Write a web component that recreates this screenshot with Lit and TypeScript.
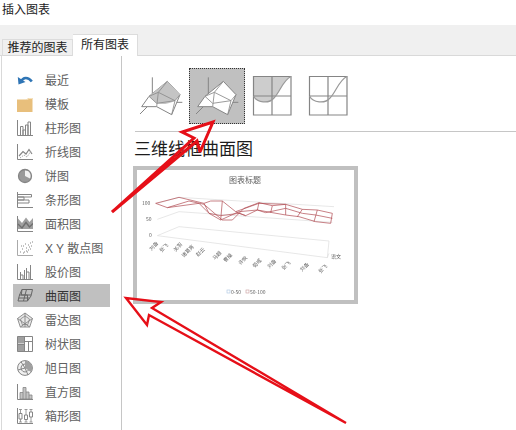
import { LitElement, html, css, svg } from "lit";
import { customElement } from "lit/decorators.js";

const G = "#858585";
const axis = svg`<path d="M.5 0V15.5H16" fill="none" stroke="${G}"/>`;
const icons: Record<string, unknown> = {
  recent: svg`<path d="M4 9.5C6 5 11 4.5 14.8 9.5" fill="none" stroke="#2f75b5" stroke-width="2.6"/><path d="M.8 5L1.5 12.5L8.5 10Z" fill="#2f75b5"/>`,
  folder: svg`<path d="M0 3.5H9.5L11.5 2H15.5V16H0Z" fill="#e8bf7c"/><path d="M10 3.5L12 2.5H15" stroke="#f6e3bf" fill="none"/>`,
  column: svg`${axis}<path d="M3.5 15V6.5H6V15M6 15V10H8.5V15M8.5 15V5H11V15M11 15V2H13.5V15" fill="none" stroke="${G}"/>`,
  line: svg`${axis}<path d="M2 12L6 7.5L9 10L12 5.5L15 10" fill="none" stroke="${G}" stroke-width="1.2"/><path d="M3 14L7 11L10 13L14 7" fill="none" stroke="#aaa" stroke-dasharray="1.5 1"/>`,
  pie: svg`<circle cx="8" cy="8" r="6.5" fill="#9a9a9a" stroke="${G}" stroke-width="1.3"/><path d="M8 8V2.4A5.6 5.6 0 0 1 13 10.5Z" fill="#f2f2f2"/>`,
  bar: svg`${axis}<path d="M1 2.5H14.5V5H1M1 5H7V8H1M1 8H12V11H1" fill="none" stroke="${G}"/>`,
  area: svg`${axis}<path d="M1 2.5L5 7L9 1.5L12.5 6L16 2V13H1Z" fill="#a0a0a0"/><path d="M1 8L5 12L9 6.5L12.5 11L16 7.5" fill="none" stroke="#6f6f6f" stroke-width="1.4"/>`,
  scatter: svg`<path d="M.5 0V15.5H16" fill="none" stroke="#aaa"/><path d="M3 12h1M5 9h1M7 12h1M6 6h1M9 8h1M10 12h1M11 5h1M13 3h1M13 9h1M4 6h1M8 4h1M11 10h1M14 6h1M6 13h1M9 11h1M12 7h1M15 2h1" stroke="${G}" stroke-dasharray="1 .4"/>`,
  stock: svg`${axis}<path d="M3.5 8V15M3 11H6V15M7.5 6V15M9.5 4V15M9 8H12V15M13.5 1V15" fill="none" stroke="${G}"/>`,
  surface: svg`<path d="M5 1.5H15.5L14 8L10.5 13H1L2.5 7ZM5 1.5L4.3 7H14M2.5 7H10.5V13M9.5 1.5L8 7L6.5 13M1.7 10H12.5" fill="none" stroke="#666"/>`,
  radar: svg`<path d="M8 1L15.5 6.5L12.7 15H3.3L.5 6.5ZM8 1V15M.5 6.5L12.7 15M15.5 6.5L3.3 15" fill="#e8e8e8" stroke="${G}" stroke-width=".9"/><path d="M8 4L12.5 7L10.8 12.5H5.2L3.5 7Z" fill="none" stroke="${G}" stroke-width=".8"/>`,
  tree: svg`<path d="M.5.5H7.5V7.5H.5ZM.5 9H7.5V15.5H.5Z" fill="#a0a0a0"/><path d="M.5.5H15.5V15.5H.5ZM7.5.5V15.5M7.5 5.5H15.5M11.5 5.5V15.5M.5 8.5H7.5" fill="none" stroke="${G}"/>`,
  sun: svg`<circle cx="8" cy="8" r="7.4" fill="#f0f0f0" stroke="${G}"/><path d="M8 8V.8A7.2 7.2 0 0 1 14 12Z" fill="#a0a0a0"/><path d="M8 4A4 4 0 1 0 11.5 10M8 8L1 10M8 8L4 1.8M8 8L11 15" fill="none" stroke="${G}"/>`,
  hist: svg`${axis}<path d="M3 15V8.5H6V3.5H9V8H12V11H15V15H3ZM6 8.5V15M9 8V15M12 11V15" fill="#c4c4c4" stroke="${G}" stroke-width=".8"/>`,
  box: svg`${axis}<path d="M3.5 1.5V14M9 1.5V14M14 1.5V14M2 1.5H5M7.5 1.5H10.5M12.5 1.5H15.5M2 14H5M7.5 14H10.5M12.5 14H15.5" fill="none" stroke="${G}" stroke-width=".8"/><path d="M2 5.5H5V11H2ZM7.5 7H10.5V11.5H7.5ZM12.5 4H15.5V9H12.5Z" fill="#fff" stroke="${G}"/>`,
};

const rows = [
  ["recent", "最近"], ["folder", "模板"], ["column", "柱形图"], ["line", "折线图"], ["pie", "饼图"],
  ["bar", "条形图"], ["area", "面积图"], ["scatter", "X Y 散点图"], ["stock", "股价图"], ["surface", "曲面图"],
  ["radar", "雷达图"], ["tree", "树状图"], ["sun", "旭日图"], ["hist", "直方图"], ["box", "箱形图"],
];

const surfaceIcon = (filled: boolean) => svg`
  <svg class="tile-svg" viewBox="9 12 168 168">
    <path d="M67 40V92M30 150L52 128M135 115H157" fill="none" stroke="#858585" stroke-width="3"/>
    <path d="M57 97L112 52L150 92L125 152L80 128H35Z" fill="#fff" stroke="#858585" stroke-width="3"/>
    ${filled ? svg`<path d="M57 97L112 52L150 92L135 110Q105 125 80 118Z" fill="#c4c4c4"/>` : ""}
    <path d="M57 97L85 85L112 52M85 85L135 110L150 92M85 85L80 128M135 110L125 152M57 97L80 118L135 110" fill="none" stroke="#8c8c8c" stroke-width="2.6"/>
  </svg>`;

const curveIcon = (filled: boolean) => svg`
  <svg class="tile-svg" viewBox="0 0 56 56">
    ${filled ? svg`<path d="M8 8H46C38 12 35 24 29 30C24 36 12 35 8 28Z" fill="#cdcdcd"/>` : ""}
    <path d="M8.5 8.5H46V47H8.5ZM27 8.5V47M8.5 28H46" fill="none" stroke="#858585" stroke-width="1.2"/>
    <path d="M8.5 28C12 35 24 36 29 30C35 24 38 12 46 8.5" fill="none" stroke="#999" stroke-width="1.2"/>
  </svg>`;

// Chart coordinates below are written in 3x units, offset from (130,165) on the page.
const px = (p: string) =>
  p.trim().split(/\s+/).map((q) => {
    const [x, y] = q.split(",").map(Number);
    return `${130 + x / 3},${165 + y / 3}`;
  }).join(" ");

const redLines = [
  "80,115 150,97 225,115 245,108 280,108 320,140 390,115 470,118 520,133 565,135 610,145",
  "80,115 115,128 180,108 225,118 280,165 310,165 345,130 390,113 430,122 470,118",
  "115,128 210,115 240,145 275,152 330,145 350,152 385,135 410,143 470,130 520,145 560,150 610,160",
  "240,145 275,165 330,140 385,135 470,150 510,155 560,170 605,175",
  "280,108 275,165", "225,115 240,145", "320,140 350,152", "390,113 385,135", "430,122 425,143",
  "470,118 470,150", "520,133 505,155", "565,135 555,170", "610,145 605,175",
];
const greyLines = [
  "85,115 150,97 615,125", "85,163 150,140 610,172", "85,212 150,185 600,228",
  "85,212 595,278 600,228", "595,278 600,265",
];
const catLabels: [string, number, number][] = [
  ["刘备", 78, 247], ["张飞", 108, 252], ["关羽", 150, 250], ["诸葛亮", 180, 262], ["赵云", 218, 265],
  ["马超", 268, 275], ["曹操", 300, 282], ["许攸", 345, 290], ["荀彧", 388, 298], ["刘备", 432, 300],
  ["张飞", 475, 305], ["刘备", 530, 310], ["张飞", 585, 315],
];

@customElement("app-root")
export class AppRoot extends LitElement {
  static styles = css`
    :host {
      display: block;
      width: 516px;
      height: 430px;
      position: relative;
      overflow: hidden;
      background: #fff;
      font-family: "Liberation Sans", "Noto Sans CJK SC", sans-serif;
      font-size: 12px;
      color: #333;
    }
    .title { height: 25px; padding: 2px 0 0 2px; box-sizing: border-box; line-height: 16px; color: #222; }
    .tabs {
      height: 31px; box-sizing: border-box; background: #f0f0f0; border-bottom: 1px solid #d9d9d9;
      display: flex; align-items: flex-end; padding: 0 0 0 2px;
    }
    .tab {
      box-sizing: border-box; height: 17px; width: 71px; text-align: center; line-height: 16px;
      border: 1px solid #dcdcdc; border-bottom: none; color: #222; margin-bottom: -1px;
    }
    .tab.active { height: 22px; width: 65px; background: #fff; line-height: 20px; border-left: none; }
    .body { display: flex; height: 374px; border-left: 1px solid #d9d9d9; margin-left: 1px; }
    .side { width: 120px; box-sizing: border-box; padding: 12px 0 0 11px; display: flex; flex-direction: column; gap: 1px; border-right: 1px solid #c6c6c6; }
    .row { width: 97px; height: 23px; display: flex; align-items: center; gap: 12px; padding-left: 4px; box-sizing: border-box; color: #606060; white-space: nowrap; }
    .row span { margin-bottom: 1px; }
    .row.sel { background: #c0c0c0; color: #333; }
    .row svg { width: 16px; height: 16px; flex: none; }
    .pane { flex: 1; padding: 12px 0 0 11px; display: flex; flex-direction: column; min-width: 0; }
    .tiles { display: flex; height: 56px; }
    .tile { width: 56px; height: 56px; box-sizing: border-box; }
    .tile.sel { background: #c0c0c0; outline: 1px dotted #333; outline-offset: -1px; }
    .tile-svg { display: block; width: 56px; height: 56px; }
    .sep { height: 1px; background: #c6c6c6; margin: 7px 0 0 2px; }
    h2 { margin: 6px 0 0 1px; font-weight: 400; font-size: 17px; line-height: 23px; color: #1c1c1c; }
    .preview { box-sizing: border-box; width: 225px; height: 138px; border: 4px solid #c0c0c0; margin-top: 5px; background: #fff; }
    .chart { display: block; width: 217px; height: 130px; filter: blur(.3px); }
    .chart text { font-family: "Noto Sans CJK SC", "Liberation Sans", sans-serif; fill: #5f5f5f; }
    .arrows { position: absolute; inset: 0; width: 516px; height: 430px; pointer-events: none; }
  `;

  render() {
    return html`
      <div class="title">插入图表</div>
      <div class="tabs">
        <div class="tab">推荐的图表</div>
        <div class="tab active">所有图表</div>
      </div>
      <div class="body">
        <div class="side">
          ${rows.map(([k, t]) => html`
            <div class="row ${k === "surface" ? "sel" : ""}">
              <svg viewBox="0 0 16 16">${icons[k]}</svg><span>${t}</span>
            </div>`)}
        </div>
        <div class="pane">
          <div class="tiles">
            <div class="tile">${surfaceIcon(true)}</div>
            <div class="tile sel">${surfaceIcon(false)}</div>
            <div class="tile">${curveIcon(true)}</div>
            <div class="tile">${curveIcon(false)}</div>
          </div>
          <div class="sep"></div>
          <h2>三维线框曲面图</h2>
          <div class="preview">
            <svg class="chart" viewBox="138 170 217 130">
              <text x="246" y="182.5" font-size="8" text-anchor="middle">图表标题</text>
              ${greyLines.map((l) => svg`<polyline points="${px(l)}" fill="none" stroke="#d6d6d6" stroke-width=".6"/>`)}
              ${redLines.map((l) => svg`<polyline points="${px(l)}" fill="none" stroke="#b04a52" stroke-width=".7"/>`)}
              <text x="143" y="205" font-size="5">100</text>
              <text x="147" y="221" font-size="5">50</text>
              <text x="150" y="237" font-size="5">0</text>
              ${catLabels.map(([t, x, y]) => {
                const X = 130 + x / 3, Y = 165 + y / 3;
                return svg`<text x="${X}" y="${Y}" font-size="5" text-anchor="middle" transform="rotate(-45 ${X} ${Y})">${t}</text>`;
              })}
              <text x="332" y="258" font-size="5">语文</text>
              <rect x="228" y="290" width="3" height="3" fill="none" stroke="#a9c4e0" stroke-width=".6"/>
              <text x="232" y="293.5" font-size="5">0-50</text>
              <rect x="247" y="290" width="3" height="3" fill="none" stroke="#c89a9a" stroke-width=".6"/>
              <text x="251" y="293.5" font-size="5">50-100</text>
            </svg>
          </div>
        </div>
      </div>
      <svg class="arrows" viewBox="0 0 516 430">
        <path d="M112 212L194 138L182 132L213 122L200 152L197 141Z" fill="none" stroke="#e60f18" stroke-width="3" stroke-miterlimit="3"/>
        <path d="M346 423L152 308L161 302L126 298L147 325L149 315Z" fill="none" stroke="#e60f18" stroke-width="2.4" stroke-miterlimit="4"/>
      </svg>
    `;
  }
}
